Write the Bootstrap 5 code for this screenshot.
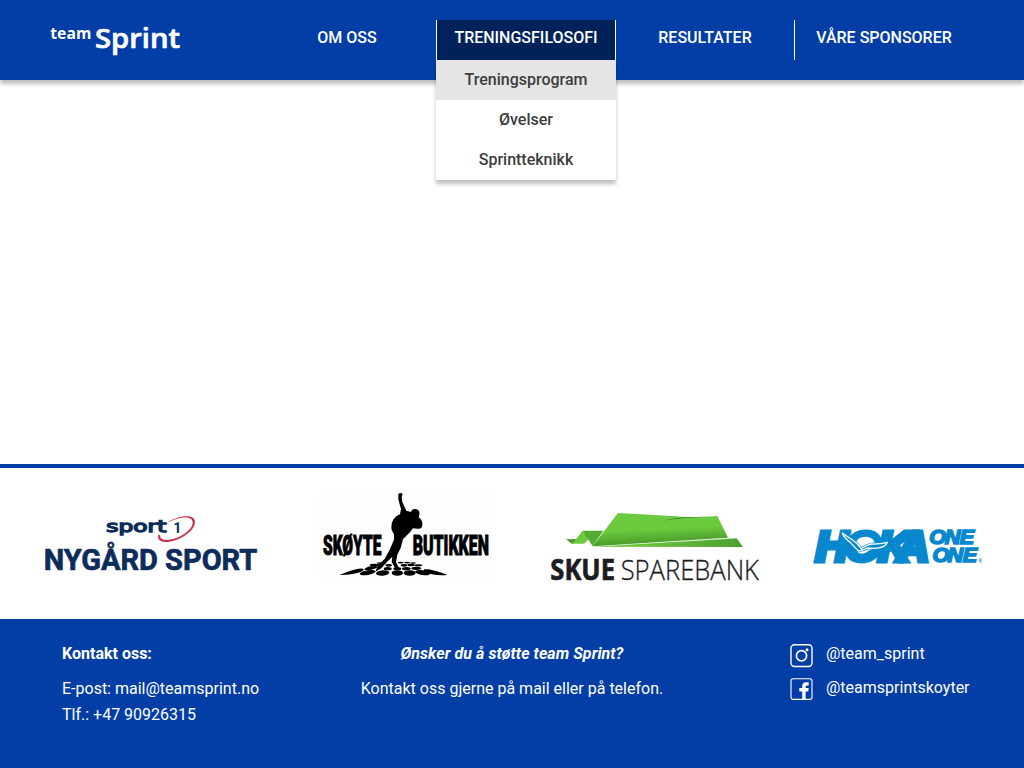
<!DOCTYPE html>
<html lang="no">
<head>
<meta charset="utf-8">
<meta name="viewport" content="width=device-width, initial-scale=1">
<title>team Sprint</title>
<link href="https://cdn.jsdelivr.net/npm/bootstrap@5.3.0/dist/css/bootstrap.min.css" rel="stylesheet">
<style>
  body { font-family: Roboto, sans-serif; color: #fff; background: #fff; }
  .site-header { height: 80px; background: #033ea6; box-shadow: 0 4px 4px rgba(0,0,0,.25); padding: 20px 51px 20px 50px; }
  .site-header svg { overflow: visible; }
  .site-nav .nav-item { width: 179px; height: 40px; }
  .site-nav .nav-link { height: 40px; padding: 0; line-height: 35px; color: #fff; font-weight: 500; text-align: center; border-left: 1px solid transparent; }
  .site-nav .nav-link.open { background: #01215a; border-color: #fff; }
  .site-nav .nav-link.ruled { border-color: #fff; }
  .site-nav .dropdown-menu { top: 40px; left: 0; width: 180px; border: 0; border-radius: 0; padding: 0; margin: 0; box-shadow: 0 4px 4px rgba(0,0,0,.25); }
  .site-nav .dropdown-item { height: 40px; line-height: 39px; padding: 0; font-weight: 500; text-align: center; color: #3d3d3d; }
  .site-nav .dropdown-item.current { background: #e5e5e5; }
  .sponsors { border-top: 4px solid #033ea6; height: 155px; }
  .sponsors svg { display: block; width: 256px; height: 151px; overflow: visible; }
  .site-footer { height: 149px; background: #033ea6; line-height: 26px; padding-top: 22px; }
  .site-footer h2 { font-size: 16px; font-weight: 700; line-height: 26px; margin-bottom: 9px; }
  .site-footer .fst-italic { letter-spacing: .06px; }
  .contact { width: 290px; padding-left: 62px; }
  .support { width: 444px; }
  .social { width: 290px; padding-left: 55px; }
  .social a { color: #fff; height: 34px; gap: 12px; padding-left: 1px; }
  .social svg { margin-top: 3px; }
</style>
</head>
<body class="d-flex flex-column vh-100 overflow-hidden">
<header class="site-header d-flex justify-content-between">
  <a href="#" aria-label="team Sprint">
    <svg width="140" height="40" viewBox="50 20 140 40" fill="#fff" stroke="#fff" font-family="'Open Sans', sans-serif">
      <text x="50.3" y="38.7" font-size="15.5" font-weight="700" stroke="none" textLength="41" lengthAdjust="spacingAndGlyphs">team</text>
      <text x="95" y="48.3" font-size="27.5" font-weight="600" stroke-width=".7" textLength="85" lengthAdjust="spacingAndGlyphs">Sprint</text>
    </svg>
  </a>
  <ul class="site-nav nav flex-nowrap">
    <li class="nav-item"><a class="nav-link" href="#">OM OSS</a></li>
    <li class="nav-item dropdown"><a class="nav-link open" href="#">TRENINGSFILOSOFI</a>
      <ul class="dropdown-menu show">
        <li><a class="dropdown-item current" href="#">Treningsprogram</a></li>
        <li><a class="dropdown-item" href="#">Øvelser</a></li>
        <li><a class="dropdown-item" href="#">Sprintteknikk</a></li>
      </ul>
    </li>
    <li class="nav-item"><a class="nav-link ruled" href="#">RESULTATER</a></li>
    <li class="nav-item"><a class="nav-link ruled" href="#">VÅRE SPONSORER</a></li>
  </ul>
</header>
<main class="flex-grow-1"></main>
<section class="sponsors">
  <div class="row g-0">
    <div class="col-3">
      <svg viewBox="0 468 256 151"><g transform="translate(30 500) scale(.33333)" fill="#0c2c5c">
        <text x="229" y="97" font-family="'DejaVu Sans'" font-size="48" stroke="#0c2c5c" stroke-width="4" textLength="180" lengthAdjust="spacingAndGlyphs">sport</text>
        <text x="430" y="98" font-family="Roboto" font-weight="700" font-size="43">1</text>
        <path fill="#c8324d" d="M411 68C442 47 494 39 495 65C496 94 442 127 406 126C387 124 382 117 385 104L391 106C389 116 398 120 411 120C447 119 489 90 488 67C487 43 443 52 411 68Z"/>
        <text x="41" y="210" font-family="Roboto" font-weight="700" font-size="88" stroke="#0c2c5c" stroke-width="2" textLength="641" lengthAdjust="spacingAndGlyphs">NYGÅRD SPORT</text>
      </g></svg>
    </div>
    <div class="col-3">
      <svg viewBox="256 468 256 151"><g transform="translate(310 480) scale(.33333)">
        <rect x="20" y="36" width="538" height="260" fill="#fefefe"/>
        <g font-family="Roboto" font-weight="900" font-size="84" stroke="#000" stroke-width="3">
          <text transform="translate(39 226) scale(.54 1)" textLength="324" lengthAdjust="spacingAndGlyphs">SKØYTE</text>
          <text transform="translate(308 226) scale(.58 1)" textLength="394" lengthAdjust="spacingAndGlyphs">BUTIKKEN</text>
        </g>
        <path d="M265 42Q272 36 278 42L275 51L277 66L285 83L289 92L303 96Q305 86 317 87Q331 90 328 105L326 112Q338 120 337 135Q335 149 322 146L309 145L301 155L279 178L272 204L262 224L258 246L266 262L255 263L245 246L247 230L227 250L214 265L196 275L204 256L224 237L239 209L252 179L252 163L245 150Q242 130 251 117Q259 106 270 103L273 87L268 70L265 57Z"/>
        <path d="M89 285Q140 262 159 266Q170 270 139 280Q113 286 89 285Z"/>
        <path d="M413 285Q362 265 342 268Q337 275 365 283Q389 288 413 285Z"/>
        <ellipse cx="173" cy="278" rx="24" ry="7" transform="rotate(-10 173 279)"/>
        <ellipse cx="218" cy="279" rx="20" ry="8" transform="rotate(-5 218 280)"/>
        <ellipse cx="262" cy="279" rx="17" ry="8"/>
        <ellipse cx="299" cy="279" rx="18" ry="8"/>
        <ellipse cx="338" cy="278" rx="23" ry="7" transform="rotate(9 338 279)"/>
        <g><ellipse cx="183" cy="264" rx="20" ry="5" transform="rotate(-10 183 264)"/>
        <ellipse cx="233" cy="266" rx="12" ry="5"/><ellipse cx="262" cy="266" rx="12" ry="5"/><ellipse cx="289" cy="266" rx="13" ry="5"/><ellipse cx="319" cy="265" rx="15" ry="5"/>
        <ellipse cx="194" cy="255" rx="15" ry="3.5"/><ellipse cx="236" cy="256" rx="10" ry="4"/><ellipse cx="282" cy="256" rx="10" ry="4"/><ellipse cx="303" cy="255" rx="11" ry="3.5"/><ellipse cx="325" cy="256" rx="12" ry="3.5"/>
        <ellipse cx="214" cy="249" rx="14" ry="2.5"/><ellipse cx="272" cy="248" rx="9" ry="2.5"/><ellipse cx="291" cy="248" rx="9" ry="2.5"/><ellipse cx="309" cy="249" rx="9" ry="2"/></g>
      </g></svg>
    </div>
    <div class="col-3">
      <svg viewBox="512 468 256 151">
        <defs>
          <linearGradient id="fold" x1=".4" y1=".2" x2=".55" y2="1"><stop offset=".35" stop-color="#6bca3e"/><stop offset="1" stop-color="#439027"/></linearGradient>
          <linearGradient id="strip" x1="0" x2="1"><stop offset=".3" stop-color="#69c43f"/><stop offset="1" stop-color="#4ca030"/></linearGradient>
        </defs>
        <g transform="translate(540 500) scale(.33333)">
        <path fill="#4a9a2d" d="M78 118L116 117L96 132Z"/>
        <path fill="#6bca3e" d="M128 92L152 112L132 131H96Z"/>
        <path fill="#55ab34" d="M128 92H190L158 139Z"/>
        <path fill="url(#fold)" d="M234 39L450 51L532 48L564 113L158 139Z"/>
        <path fill="#3c8e27" d="M370 62Q410 50 450 51L500 50Q420 53 370 62Z"/>
        <path fill="#fff" d="M380 46L450 51L532 48V44H380Z"/>
        <path fill="url(#strip)" d="M156 140L590 115L609 141Z"/>
        <path fill="none" stroke="#c9efb8" stroke-width="1.5" d="M400 125L590 114"/>
        <g font-family="'Open Sans'" fill="#1d1d1f" stroke="#1d1d1f">
          <text x="31" y="240" font-size="84" font-weight="700" stroke-width="2" textLength="194" lengthAdjust="spacingAndGlyphs">SKUE</text>
          <text x="242" y="240" font-size="84" font-weight="300" stroke-width="1" textLength="415" lengthAdjust="spacingAndGlyphs">SPAREBANK</text>
        </g>
      </g></svg>
    </div>
    <div class="col-3">
      <svg viewBox="768 468 256 151"><g transform="translate(800 515) scale(.33333)" fill="#0788ce" stroke="#0788ce" font-family="'Liberation Sans'" font-weight="700" font-style="italic">
        <text transform="translate(0 137) scale(1.05 1)" x="44 130 223 277" font-size="127" stroke-width="15">HOKA</text>
        <text transform="scale(1.08 1)" font-size="60" stroke-width="5"><tspan x="359 402 444" y="86">ONE</tspan><tspan x="368 410 452" y="141">ONE</tspan></text>
        <ellipse cx="196" cy="87" rx="29" ry="22" fill="#fff" stroke="none"/>
        <path stroke-width="8" stroke-linejoin="round" d="M127 54Q132 69 151 82Q166 99 176 108L188 105L202 99Q223 102 240 98Q258 94 262 82Q238 88 213 87Q197 91 184 101Q174 86 158 75Q144 66 127 54Z"/>
        <path fill="#0788ce" stroke="#fff" stroke-width="4" stroke-linejoin="round" d="M127 54Q132 69 151 82Q166 99 176 108L188 105L202 99Q223 102 240 98Q258 94 262 82Q238 88 213 87Q197 91 184 101Q174 86 158 75Q144 66 127 54Z"/>
        <text x="535" y="143" font-size="16" stroke="none" font-style="normal">®</text>
      </g></svg>
    </div>
  </div>
</section>
<footer class="site-footer d-flex">
  <div class="contact"><h2>Kontakt oss:</h2>E-post: mail@teamsprint.no<br>Tlf.: +47 90926315</div>
  <div class="support text-center"><h2 class="fst-italic">Ønsker du å støtte team Sprint?</h2>Kontakt oss gjerne på mail eller på telefon.</div>
  <div class="social">
    <a class="d-flex text-decoration-none" href="#">
      <svg width="24" height="24" viewBox="0 0 24 24" fill="none" stroke="#fff" stroke-width="1.4"><rect x="1" y=".8" width="21" height="21.7" rx="3.5"/><circle cx="11.5" cy="11.8" r="5.1" stroke-width="1.7"/><circle cx="17" cy="5.8" r="1.5" fill="#fff" stroke="none"/></svg>
      <span>@team_sprint</span></a>
    <a class="d-flex text-decoration-none" href="#">
      <svg width="24" height="24" viewBox="0 0 24 24"><rect x="1" y=".8" width="21" height="20.6" rx="2.2" fill="none" stroke="#fff" stroke-width="1.1"/><path fill="#fff" d="M12.2 21.5V13.6H9.3V10.1h2.9V8.2q0-3.9 4-3.9h2.5v3.3H17q-1.4 0-1.4 1.4v1.1h3.1l-.5 3.5h-2.6v7.9Z"/></svg>
      <span>@teamsprintskoyter</span></a>
  </div>
</footer>
<script src="https://cdn.jsdelivr.net/npm/bootstrap@5.3.0/dist/js/bootstrap.bundle.min.js"></script>
</body>
</html>
